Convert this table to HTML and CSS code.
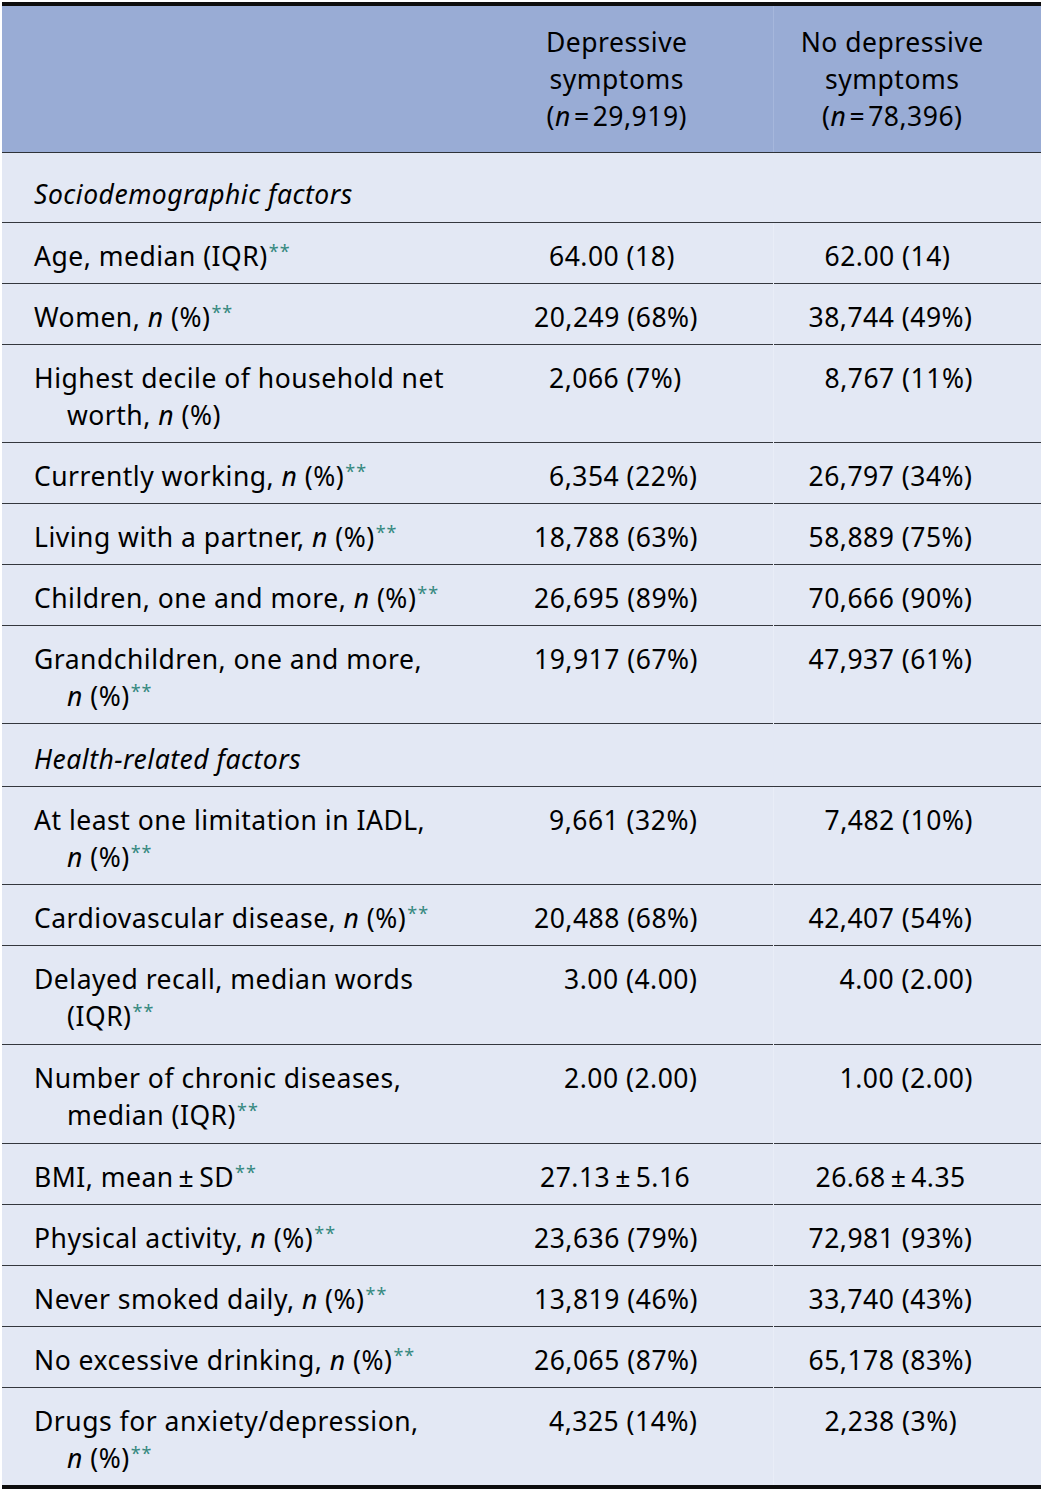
FILE: index.html
```html
<!DOCTYPE html>
<html lang="en">
<head>
<meta charset="utf-8">
<title>Table</title>
<link rel="stylesheet" href="styles.css">
</head>
<body>
<table class="tbl">
  <colgroup>
    <col class="col-label">
    <col class="col-a">
    <col class="col-b">
  </colgroup>
  <thead>
    <tr>
      <th class="h-label"></th>
      <th class="h-a">Depressive<br>symptoms<br>(<i>n</i>&#8202;=&#8202;29,919)</th>
      <th class="h-b">No depressive<br>symptoms<br>(<i>n</i>&#8202;=&#8202;78,396)</th>
    </tr>
  </thead>
  <tbody>
    <tr class="sec first"><td colspan="3"><i>Sociodemographic factors</i></td></tr>
    <tr><td class="lab">Age, median (IQR)<sup class="sig">**</sup></td><td class="v s1">64.00 (18)</td><td class="v s1">62.00 (14)</td></tr>
    <tr><td class="lab">Women, <i>n</i> (%)<sup class="sig">**</sup></td><td class="v">20,249 (68%)</td><td class="v">38,744 (49%)</td></tr>
    <tr><td class="lab">Highest decile of household net<br>worth, <i>n</i> (%)</td><td class="v s1">2,066 (7%)</td><td class="v s1">8,767 (11%)</td></tr>
    <tr><td class="lab">Currently working, <i>n</i> (%)<sup class="sig">**</sup></td><td class="v s1">6,354 (22%)</td><td class="v">26,797 (34%)</td></tr>
    <tr><td class="lab">Living with a partner, <i>n</i> (%)<sup class="sig">**</sup></td><td class="v">18,788 (63%)</td><td class="v">58,889 (75%)</td></tr>
    <tr><td class="lab">Children, one and more, <i>n</i> (%)<sup class="sig">**</sup></td><td class="v">26,695 (89%)</td><td class="v">70,666 (90%)</td></tr>
    <tr><td class="lab">Grandchildren, one and more,<br><i>n</i> (%)<sup class="sig">**</sup></td><td class="v">19,917 (67%)</td><td class="v">47,937 (61%)</td></tr>
    <tr class="sec"><td colspan="3"><i>Health-related factors</i></td></tr>
    <tr><td class="lab">At least one limitation in IADL,<br><i>n</i> (%)<sup class="sig">**</sup></td><td class="v s1">9,661 (32%)</td><td class="v s1">7,482 (10%)</td></tr>
    <tr><td class="lab">Cardiovascular disease, <i>n</i> (%)<sup class="sig">**</sup></td><td class="v">20,488 (68%)</td><td class="v">42,407 (54%)</td></tr>
    <tr class="tall"><td class="lab">Delayed recall, median words<br>(IQR)<sup class="sig">**</sup></td><td class="v s2">3.00 (4.00)</td><td class="v s2">4.00 (2.00)</td></tr>
    <tr class="tall"><td class="lab">Number of chronic diseases,<br>median (IQR)<sup class="sig">**</sup></td><td class="v s2">2.00 (2.00)</td><td class="v s2">1.00 (2.00)</td></tr>
    <tr><td class="lab">BMI, mean&#8201;±&#8201;SD<sup class="sig">**</sup></td><td class="v pm">27.13&#8201;±&#8201;5.16</td><td class="v pm">26.68&#8201;±&#8201;4.35</td></tr>
    <tr><td class="lab">Physical activity, <i>n</i> (%)<sup class="sig">**</sup></td><td class="v">23,636 (79%)</td><td class="v">72,981 (93%)</td></tr>
    <tr><td class="lab">Never smoked daily, <i>n</i> (%)<sup class="sig">**</sup></td><td class="v">13,819 (46%)</td><td class="v">33,740 (43%)</td></tr>
    <tr><td class="lab">No excessive drinking, <i>n</i> (%)<sup class="sig">**</sup></td><td class="v">26,065 (87%)</td><td class="v">65,178 (83%)</td></tr>
    <tr class="last"><td class="lab">Drugs for anxiety/depression,<br><i>n</i> (%)<sup class="sig">**</sup></td><td class="v s1">4,325 (14%)</td><td class="v s1">2,238 (3%)</td></tr>
  </tbody>
</table>
</body>
</html>
```
FILE: styles.css
```css
html, body {
  margin: 0;
  padding: 0;
  background: #ffffff;
}

body {
  font-family: "Noto Sans", "Open Sans", sans-serif;
  font-size: 26.5px;
  letter-spacing: 0.5px;
  color: #000000;
}

.tbl {
  margin: 2px 0 0 2px;
  width: 1039px;
  border-collapse: collapse;
  table-layout: fixed;
  border-top: 4px solid #0d0d0d;
  border-bottom: 4px solid #0d0d0d;
}

.col-label { width: 496px; }
.col-a { width: 275px; }
.col-b { width: 268px; }

.tbl thead th {
  background: #99acd5;
  font-weight: normal;
  line-height: 37px;
  padding: 18px 0 17px 0;
  text-align: center;
  vertical-align: top;
  border-bottom: 1px solid #2e3238;
}

.tbl thead th.h-a {
  padding-right: 37px;
}

.tbl thead th.h-b {
  padding-right: 30px;
  border-left: 1px solid #a6b7dc;
}

.tbl tbody td {
  background: #e3e8f4;
  line-height: 37px;
  padding: 15px 0 8px 0;
  vertical-align: top;
  border-top: 1px solid #34373d;
}

.tbl tbody tr.tall td {
  padding-bottom: 9px;
}

.tbl tbody tr.sec td {
  padding: 17px 0 8px 32px;
}

.tbl tbody tr.sec.first td {
  padding-top: 23px;
  padding-bottom: 9px;
  border-top: none;
}

.tbl tbody td.lab {
  padding-left: 65px;
  text-indent: -33px;
}

.tbl tbody td.v {
  white-space: nowrap;
}

.tbl tbody td.v:nth-child(2) { padding-left: 36px; }
.tbl tbody td.v:nth-child(3) { padding-left: 35px; border-left: 1px solid #e9edf7; }

.tbl tbody td.v.s1:nth-child(2) { padding-left: 51px; }
.tbl tbody td.v.s1:nth-child(3) { padding-left: 51px; }
.tbl tbody td.v.s2:nth-child(2) { padding-left: 66px; }
.tbl tbody td.v.s2:nth-child(3) { padding-left: 66px; }
.tbl tbody td.v.pm:nth-child(2) { padding-left: 42px; }
.tbl tbody td.v.pm:nth-child(3) { padding-left: 42px; }

.sig {
  color: #35887f;
  font-size: 18px;
  line-height: 0;
  vertical-align: 8px;
  letter-spacing: 1px;
  margin-left: 1px;
}
```
